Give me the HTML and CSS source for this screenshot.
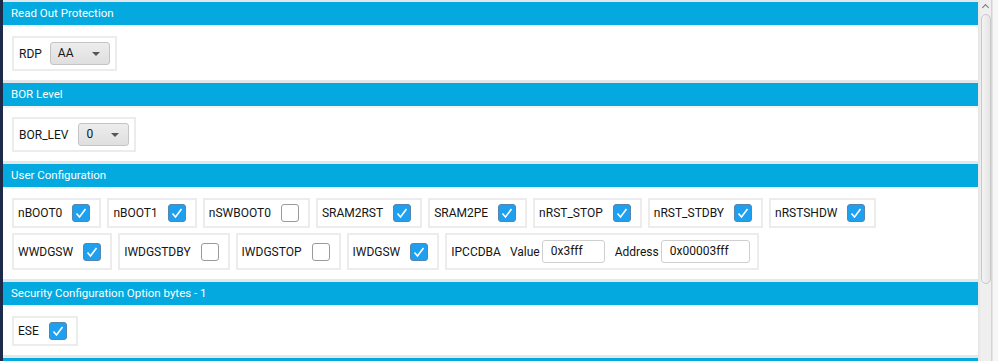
FILE: index.html
```html
<!DOCTYPE html>
<html lang="en">
<head>
	<meta charset="utf-8" />
	<title>Option Bytes</title>
	<link rel="stylesheet" href="styles.css">
</head>
<body>
<div class="frame">
	<div class="panel">

		<div class="section">
			<div class="sec-head">Read Out Protection</div>
			<div class="sec-body">
				<div class="row">
					<div class="opt opt-sel">
						<span class="lbl">RDP</span>
						<div class="select sel-rdp">AA<span class="caret"></span></div>
					</div>
				</div>
			</div>
		</div>

		<div class="section">
			<div class="sec-head">BOR Level</div>
			<div class="sec-body">
				<div class="row">
					<div class="opt opt-sel">
						<span class="lbl">BOR_LEV</span>
						<div class="select sel-bor">0<span class="caret"></span></div>
					</div>
				</div>
			</div>
		</div>

		<div class="section">
			<div class="sec-head">User Configuration</div>
			<div class="sec-body">
				<div class="row">
					<div class="opt"><span class="lbl">nBOOT0</span><span class="check on"><svg viewBox="0 0 16 16"><path d="M3.5 8.5l3 3.5 6-8"/></svg></span></div>
					<div class="opt"><span class="lbl">nBOOT1</span><span class="check on"><svg viewBox="0 0 16 16"><path d="M3.5 8.5l3 3.5 6-8"/></svg></span></div>
					<div class="opt"><span class="lbl">nSWBOOT0</span><span class="check"></span></div>
					<div class="opt"><span class="lbl">SRAM2RST</span><span class="check on"><svg viewBox="0 0 16 16"><path d="M3.5 8.5l3 3.5 6-8"/></svg></span></div>
					<div class="opt"><span class="lbl">SRAM2PE</span><span class="check on"><svg viewBox="0 0 16 16"><path d="M3.5 8.5l3 3.5 6-8"/></svg></span></div>
					<div class="opt"><span class="lbl">nRST_STOP</span><span class="check on"><svg viewBox="0 0 16 16"><path d="M3.5 8.5l3 3.5 6-8"/></svg></span></div>
					<div class="opt"><span class="lbl">nRST_STDBY</span><span class="check on"><svg viewBox="0 0 16 16"><path d="M3.5 8.5l3 3.5 6-8"/></svg></span></div>
					<div class="opt"><span class="lbl">nRSTSHDW</span><span class="check on"><svg viewBox="0 0 16 16"><path d="M3.5 8.5l3 3.5 6-8"/></svg></span></div>
				</div>
				<div class="row">
					<div class="opt"><span class="lbl">WWDGSW</span><span class="check on"><svg viewBox="0 0 16 16"><path d="M3.5 8.5l3 3.5 6-8"/></svg></span></div>
					<div class="opt"><span class="lbl">IWDGSTDBY</span><span class="check"></span></div>
					<div class="opt"><span class="lbl">IWDGSTOP</span><span class="check"></span></div>
					<div class="opt"><span class="lbl">IWDGSW</span><span class="check on"><svg viewBox="0 0 16 16"><path d="M3.5 8.5l3 3.5 6-8"/></svg></span></div>
					<div class="opt opt-field">
						<span class="lbl">IPCCDBA</span>
						<span class="sub">Value</span>
						<div class="field f-value">0x3fff</div>
						<span class="sub">Address</span>
						<div class="field f-addr">0x00003fff</div>
					</div>
				</div>
			</div>
		</div>

		<div class="section">
			<div class="sec-head">Security Configuration Option bytes - 1</div>
			<div class="sec-body">
				<div class="row">
					<div class="opt"><span class="lbl">ESE</span><span class="check on"><svg viewBox="0 0 16 16"><path d="M3.5 8.5l3 3.5 6-8"/></svg></span></div>
				</div>
			</div>
		</div>

		<div class="section">
			<div class="sec-head"></div>
		</div>

	</div>

	<div class="scrollbar">
		<div class="sb-up"></div>
		<div class="sb-thumb"></div>
	</div>
</div>
</body>
</html>
```

FILE: styles.css
```css
		*{
			box-sizing: border-box;
		}

		body{
			margin: 0;
			font-family: Roboto, "Liberation Sans", sans-serif;
			font-size: 12px;
			color: #151515;
			background: #fff;
			overflow: hidden;
		}

		.frame{
			display: flex;
			height: 361px;
			border-left: 3px solid #1c2b4a;
		}

		.panel{
			flex: 1;
			display: flex;
			flex-direction: column;
			gap: 3px;
			padding-top: 2px;
			background: #e3e7ea;
			overflow: hidden;
		}

		.section{
			background: #fff;
		}

		.sec-head{
			height: 23px;
			line-height: 23px;
			padding-left: 8px;
			background: #03a9df;
			color: #fff;
			font-size: 11.5px;
		}

		.sec-body{
			display: flex;
			flex-direction: column;
			gap: 5px;
			padding: 9px 9px 9px;
			border-top: 2px solid #f2f4f5;
		}

		.row{
			display: flex;
			gap: 6px;
		}

		.opt{
			display: flex;
			align-items: center;
			padding: 4px 8px 4px 4px;
			border: 2px solid #ececec;
		}

		.opt-sel{
			padding: 4px 5px 4px 5px;
		}

		.lbl{
			margin-right: 10px;
		}

		.select{
			position: relative;
			height: 23px;
			line-height: 21px;
			padding-left: 7px;
			border: 1px solid #c4c4c4;
			border-radius: 3px;
			background: linear-gradient(#ededed, #dfdfdf);
		}

		.sel-rdp{
			width: 60px;
			margin-left: -2px;
		}

		.sel-bor{
			width: 51px;
		}

		.caret{
			position: absolute;
			right: 9px;
			top: 9px;
			border-left: 4px solid transparent;
			border-right: 4px solid transparent;
			border-top: 4px solid #555;
		}

		.check{
			width: 18px;
			height: 18px;
			margin-right: 1px;
			border: 1px solid #9a9a9a;
			border-radius: 3px;
			background: #fff;
		}

		.check.on{
			background: #1ea0f0;
			border-color: #5686ac;
		}

		.check svg{
			display: block;
			width: 16px;
			height: 16px;
			fill: none;
			stroke: #fff;
			stroke-width: 1.6;
		}

		.opt-field{
			padding: 5px 7px 5px 4px;
		}

		.opt-field .lbl{
			margin-right: 9px;
		}

		.sub{
			margin-right: 2px;
		}

		.field{
			height: 23px;
			line-height: 21px;
			padding-left: 8px;
			border: 1px solid #cfcfcf;
			border-radius: 3px;
			background: #fff;
		}

		.f-value{
			width: 63px;
			margin-right: 10px;
		}

		.f-addr{
			width: 89px;
		}

		.scrollbar{
			position: relative;
			width: 20px;
			background: linear-gradient(to right, #e4e4e4 0, #efefef 3px, #efefef 13px, #d4d4d4 13px, #d4d4d4 14px, #f6f6f6 15px);
		}

		.sb-up{
			position: absolute;
			left: 5px;
			top: 5px;
			width: 5px;
			height: 5px;
			border-left: 1px solid #777;
			border-top: 1px solid #777;
			transform: rotate(45deg);
		}

		.sb-thumb{
			position: absolute;
			left: 3px;
			top: 14px;
			width: 10px;
			height: 270px;
			border: 1px solid #c9c9c9;
			border-radius: 5px;
			background: linear-gradient(to right, #f4f4f4, #e4e4e4);
		}
```
